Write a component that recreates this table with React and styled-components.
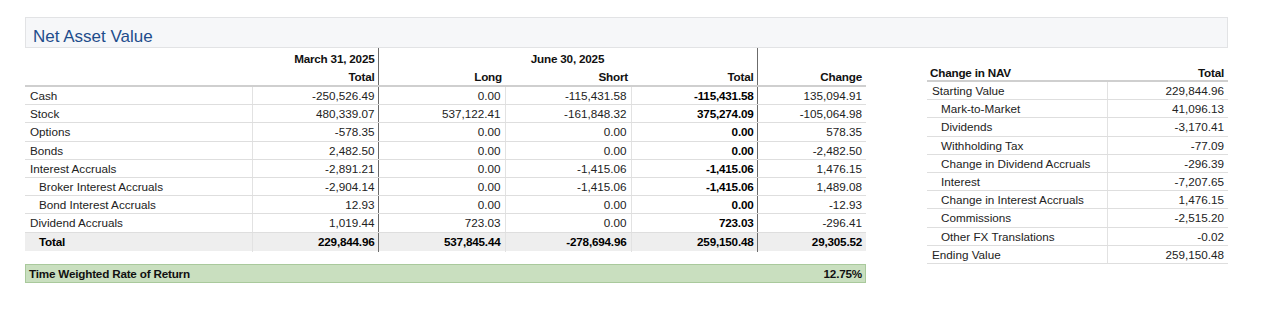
import styled, { createGlobalStyle } from "styled-components";

const GlobalStyle = createGlobalStyle`
  body {
    margin: 0;
    background: #ffffff;
    font-family: "Liberation Sans", Arial, sans-serif;
    color: #222;
  }
`;

const navRows = [
  { label: 'Cash', march: '-250,526.49', long: '0.00', short: '-115,431.58', total: '-115,431.58', change: '135,094.91' },
  { label: 'Stock', march: '480,339.07', long: '537,122.41', short: '-161,848.32', total: '375,274.09', change: '-105,064.98' },
  { label: 'Options', march: '-578.35', long: '0.00', short: '0.00', total: '0.00', change: '578.35' },
  { label: 'Bonds', march: '2,482.50', long: '0.00', short: '0.00', total: '0.00', change: '-2,482.50' },
  { label: 'Interest Accruals', march: '-2,891.21', long: '0.00', short: '-1,415.06', total: '-1,415.06', change: '1,476.15' },
  { label: 'Broker Interest Accruals', sub: true, march: '-2,904.14', long: '0.00', short: '-1,415.06', total: '-1,415.06', change: '1,489.08' },
  { label: 'Bond Interest Accruals', sub: true, march: '12.93', long: '0.00', short: '0.00', total: '0.00', change: '-12.93' },
  { label: 'Dividend Accruals', march: '1,019.44', long: '723.03', short: '0.00', total: '723.03', change: '-296.41' },
];

const changeRows = [
  { label: 'Starting Value', value: '229,844.96' },
  { label: 'Mark-to-Market', sub: true, value: '41,096.13' },
  { label: 'Dividends', sub: true, value: '-3,170.41' },
  { label: 'Withholding Tax', sub: true, value: '-77.09' },
  { label: 'Change in Dividend Accruals', sub: true, value: '-296.39' },
  { label: 'Interest', sub: true, value: '-7,207.65' },
  { label: 'Change in Interest Accruals', sub: true, value: '1,476.15' },
  { label: 'Commissions', sub: true, value: '-2,515.20' },
  { label: 'Other FX Translations', sub: true, value: '-0.02' },
  { label: 'Ending Value', value: '259,150.48' },
];

const Page = styled.div`
  padding: 17px 0 0 25px;
`;

const Section = styled.section`
  width: 1203px;
`;

const TitleBar = styled.div`
  box-sizing: border-box;
  height: 31px;
  padding: 9px 0 0 7px;
  background: #f6f7f9;
  border: 1px solid #e2e3e5;
`;

const Title = styled.h2`
  margin: 0;
  font-size: 17px;
  line-height: 20px;
  font-weight: normal;
  color: #1e4d8c;
`;

const Body = styled.div`
  display: flex;
  align-items: flex-start;
  gap: 61px;
`;

const LeftCol = styled.div`
  width: 841px;
`;

const Table = styled.table`
  width: ${(p) => p.$width}px;
  table-layout: fixed;
  border-collapse: collapse;
  font-size: 11.7px;
  line-height: 13px;
  margin-top: ${(p) => p.$top || 0}px;
`;

const Head = styled.th`
  padding: 0 ${(p) => (p.$pr != null ? p.$pr : 3)}px 0 ${(p) => (p.$pl || 3)}px;
  height: ${(p) => p.$h || 17}px;
  font-weight: bold;
  letter-spacing: -0.2px;
  color: #111;
  text-align: ${(p) => p.$align || 'right'};
  vertical-align: middle;
  white-space: nowrap;
  border-right: ${(p) => (p.$dark ? '1px solid #6b6b6b' : 'none')};
  border-bottom: ${(p) => (p.$line ? '2px solid #cfcfcf' : 'none')};
`;

const Row = styled.tr`
  background: ${(p) => (p.$total ? '#eeeeee' : 'transparent')};
  font-weight: ${(p) => (p.$total ? 'bold' : 'normal')};
`;

const Cell = styled.td`
  padding: 0 ${(p) => (p.$pr != null ? p.$pr : 4)}px 0 ${(p) => (p.$sub ? 14 : 5)}px;
  height: ${(p) => p.$h || 17.2}px;
  text-align: ${(p) => (p.$label ? 'left' : 'right')};
  white-space: nowrap;
  color: ${(p) => (p.$strong ? '#000' : '#222')};
  font-weight: ${(p) => (p.$strong ? 'bold' : 'inherit')};
  letter-spacing: ${(p) => (p.$strong ? '-0.2px' : '0')};
  border-bottom: 1px solid ${(p) => (p.$noLine ? 'transparent' : '#dedede')};
  border-right: ${(p) => (p.$dark ? '1px solid #6b6b6b' : p.$sep ? '1px solid #e2e2e2' : 'none')};
`;

const TwrBar = styled.div`
  box-sizing: border-box;
  margin-top: 12px;
  height: 19px;
  display: flex;
  align-items: center;
  justify-content: space-between;
  padding: 0 3px 0 3px;
  background: #c9dfbf;
  border: 1px solid #a9c99c;
  font-size: 11.7px;
  font-weight: bold;
  letter-spacing: -0.2px;
  color: #111;
`;

const ChangeTable = () => (
  <Table $width={301} $top={17}>
    <colgroup>
      <col style={{ width: 180 }} />
      <col style={{ width: 121 }} />
    </colgroup>
    <thead>
      <tr>
        <Head $align="left" $pl={3} $h={15} $line>Change in NAV</Head>
        <Head $h={15} $line $pr={4}>Total</Head>
      </tr>
    </thead>
    <tbody>
      {changeRows.map((r) => (
        <Row key={r.label}>
          <Cell $label $sub={r.sub} $sep $h={17.2}>{r.label}</Cell>
          <Cell $h={17.2}>{r.value}</Cell>
        </Row>
      ))}
    </tbody>
  </Table>
);

const App = () => (
  <>
    <GlobalStyle />
    <Page>
      <Section>
        <TitleBar>
          <Title>Net Asset Value</Title>
        </TitleBar>
        <Body>
          <LeftCol>
            <Table $width={841}>
              <colgroup>
                <col style={{ width: 227 }} />
                <col style={{ width: 126 }} />
                <col style={{ width: 127 }} />
                <col style={{ width: 126 }} />
                <col style={{ width: 126 }} />
                <col style={{ width: 109 }} />
              </colgroup>
              <thead>
                <tr>
                  <Head $h={20} />
                  <Head $h={20} $dark>March 31, 2025</Head>
                  <Head $h={20} colSpan={3} $align="center" $dark>June 30, 2025</Head>
                  <Head $h={20} />
                </tr>
                <tr>
                  <Head $line />
                  <Head $line $dark>Total</Head>
                  <Head $line>Long</Head>
                  <Head $line>Short</Head>
                  <Head $line $dark>Total</Head>
                  <Head $line $pr={4}>Change</Head>
                </tr>
              </thead>
              <tbody>
                {navRows.map((r) => (
                  <Row key={r.label}>
                    <Cell $label $sub={r.sub} $sep>{r.label}</Cell>
                    <Cell $dark $pr={3}>{r.march}</Cell>
                    <Cell $sep>{r.long}</Cell>
                    <Cell $sep>{r.short}</Cell>
                    <Cell $dark $strong $pr={3}>{r.total}</Cell>
                    <Cell>{r.change}</Cell>
                  </Row>
                ))}
                <Row $total>
                  <Cell $label $sub $sep $strong $h={18} $noLine>Total</Cell>
                  <Cell $dark $strong $pr={3} $h={18} $noLine>229,844.96</Cell>
                  <Cell $sep $strong $h={18} $noLine>537,845.44</Cell>
                  <Cell $sep $strong $h={18} $noLine>-278,694.96</Cell>
                  <Cell $dark $strong $pr={3} $h={18} $noLine>259,150.48</Cell>
                  <Cell $strong $h={18} $noLine>29,305.52</Cell>
                </Row>
              </tbody>
            </Table>
            <TwrBar>
              <span>Time Weighted Rate of Return</span>
              <span>12.75%</span>
            </TwrBar>
          </LeftCol>
          <ChangeTable />
        </Body>
      </Section>
    </Page>
  </>
);

export default App;
